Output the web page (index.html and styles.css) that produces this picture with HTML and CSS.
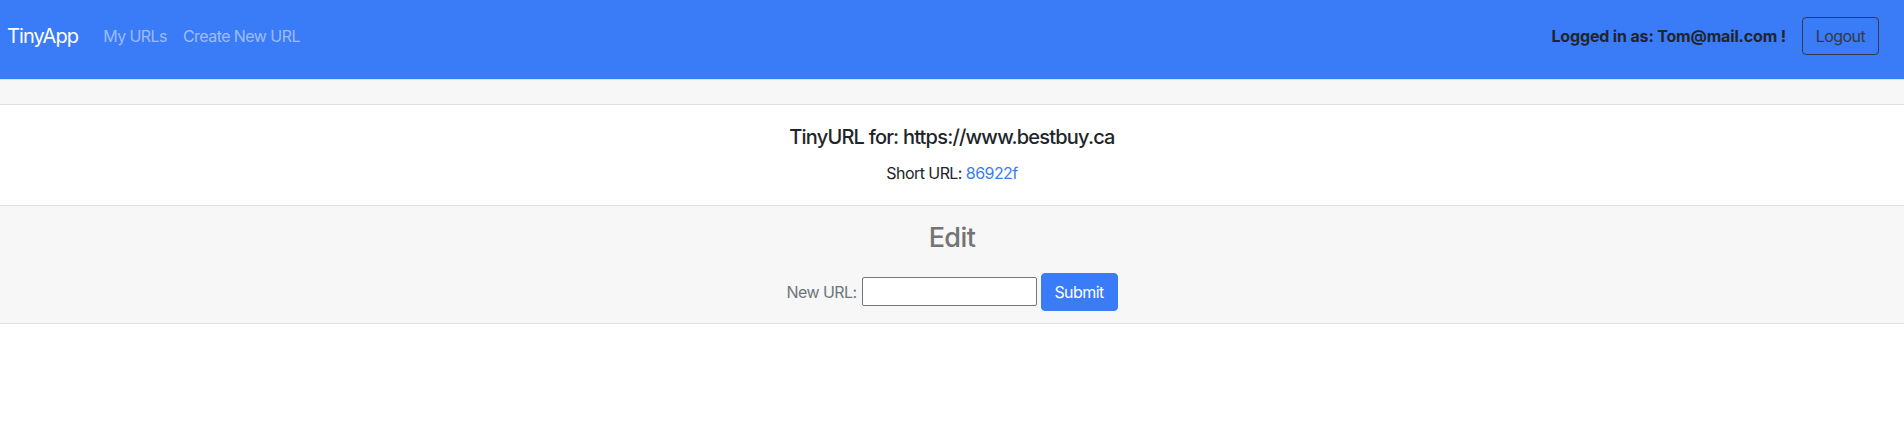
FILE: index.html
```html
<!DOCTYPE html>
<html lang="en">
<head>
<meta charset="utf-8">
<title>TinyApp</title>
<link rel="stylesheet" href="styles.css">
</head>
<body>
<nav class="navbar">
  <div class="nav-left">
    <a class="brand" href="#">TinyApp</a>
    <a class="nav-link" href="#">My URLs</a>
    <a class="nav-link" href="#">Create New URL</a>
  </div>
  <div class="nav-right">
    <span class="user">Logged in as: Tom@mail.com !</span>
    <button class="btn-outline">Logout</button>
  </div>
</nav>
<div class="card">
  <div class="card-header"></div>
  <div class="card-body">
    <h5 class="card-title">TinyURL for: https://www.bestbuy.ca</h5>
    <p class="card-text">Short URL: <a class="short" href="#">86922f</a></p>
  </div>
  <div class="card-footer">
    <h3 class="edit-title">Edit</h3>
    <form class="edit-form">
      <label class="label" for="newurl">New URL:</label>
      <input class="url-input" id="newurl" type="text">
      <button class="btn-primary" type="button">Submit</button>
    </form>
  </div>
</div>
</body>
</html>
```
FILE: styles.css
```css
* { box-sizing: border-box; }
html, body { margin: 0; padding: 0; }
body {
  font-family: Inter, "Liberation Sans", sans-serif;
  font-size: 16px;
  line-height: 1.5;
  letter-spacing: -0.035em;
  color: #212529;
  background: #fff;
}
a { text-decoration: none; }

.navbar {
  height: 79px;
  background: #3a7bf7;
  display: flex;
  justify-content: space-between;
  align-items: flex-start;
  padding: 17px 25px 0 6px;
}
.nav-left, .nav-right {
  display: flex;
  align-items: center;
  height: 38px;
}
.brand {
  color: #fff;
  font-size: 20px;
  line-height: 30px;
  letter-spacing: -0.045em;
  margin-right: 16px;
  padding: 0 1px;
}
.nav-link {
  color: rgba(255, 255, 255, 0.5);
  padding: 0 8px;
}
.user {
  font-weight: 700;
  letter-spacing: -0.01em;
  color: #212529;
  margin-right: 16px;
}
.btn-outline {
  font-family: inherit;
  font-size: 16px;
  letter-spacing: inherit;
  line-height: 24px;
  height: 38px;
  width: 77px;
  padding: 6px 0;
  color: #343a40;
  background: transparent;
  border: 1px solid #343a40;
  border-radius: 4px;
}

.card {
  border-top: 1px solid #dfdfdf;
  border-bottom: 1px solid #dfdfdf;
  text-align: center;
}
.card-header {
  height: 25px;
  background: #f7f7f7;
  border-bottom: 1px solid #dfdfdf;
}
.card-body {
  padding: 20px;
}
.card-title {
  margin: 0 0 12px;
  font-size: 20px;
  font-weight: 500;
  line-height: 24px;
  letter-spacing: -0.04em;
}
.card-text {
  margin: 0;
}
.short { color: #3b7cf6; }

.card-footer {
  background: #f7f7f7;
  border-top: 1px solid #dfdfdf;
  padding: 12px 20px;
  color: #6c757d;
}
.edit-title {
  margin: 0 0 18px;
  padding-top: 3px;
  font-size: 27px;
  font-weight: 500;
  line-height: 33.6px;
  color: #747474;
}
.edit-form {
  display: flex;
  justify-content: center;
  align-items: center;
}
.label {
  color: #6c757d;
  margin-right: 5px;
}
.url-input {
  width: 175px;
  height: 29px;
  border: 1px solid #767676;
  border-radius: 2px;
  background: #fff;
  margin: 0 4px 0 0;
  font-family: inherit;
  font-size: 16px;
}
.btn-primary {
  font-family: inherit;
  font-size: 16px;
  letter-spacing: inherit;
  line-height: 24px;
  height: 38px;
  width: 77px;
  color: #fff;
  background: #3a7bf7;
  border: 1px solid #3a7bf7;
  border-radius: 4px;
  padding: 0;
}
```
